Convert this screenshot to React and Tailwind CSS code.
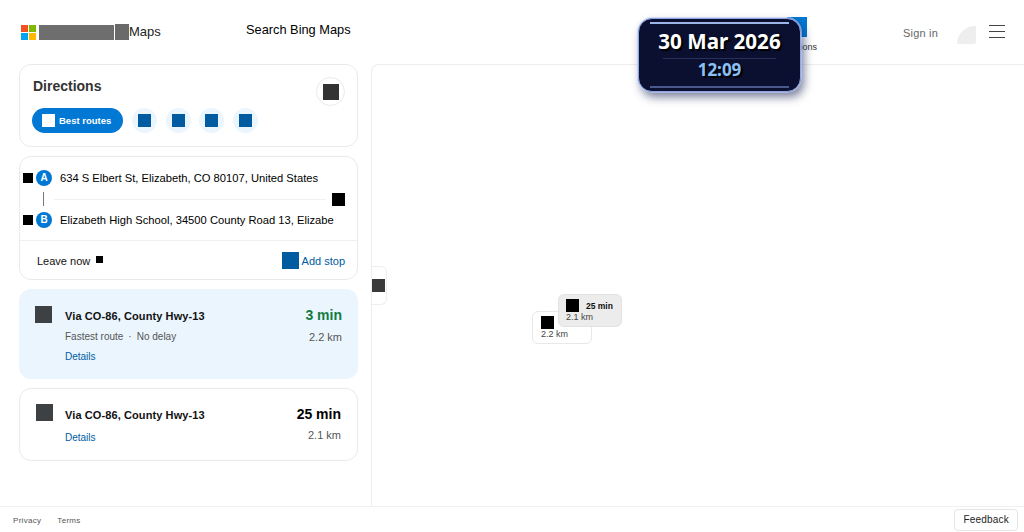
import React from 'react';

const Box = ({ className }) => <div className={`shrink-0 ${className}`} />;

function Header() {
  return (
    <header className="h-16 shrink-0 flex items-start">
      <div className="w-[246px] pl-[21px] pt-6 flex items-center">
        <div className="grid grid-cols-2 gap-px w-[15px] h-[15px] shrink-0">
          <div className="bg-[#f25022]" />
          <div className="bg-[#7fba00]" />
          <div className="bg-[#00a4ef]" />
          <div className="bg-[#ffb900]" />
        </div>
        <Box className="ml-[3px] w-[75px] h-[15px] bg-[#6e6e6e]" />
        <Box className="ml-px w-[14px] h-4 bg-[#6a6a6a]" />
        <span className="text-[13px] leading-4 text-[#222222]">Maps</span>
      </div>
      <div className="pt-[22px] text-[12.8px] leading-4 text-black">Search Bing Maps</div>
      <div className="ml-auto flex items-start">
        <div className="w-10 mr-[86px] mt-[17px] flex flex-col items-center">
          <Box className="w-5 h-5 bg-[#0078d4]" />
          <div className="mt-[4px] text-[9px] leading-3 text-[#333333]">Directions</div>
        </div>
        <div className="pt-[26px] text-[11px] leading-[14px] text-[#666666] tracking-[0.2px]">Sign in</div>
        <div className="ml-[19px] mt-[26px] w-[19px] h-[18px] bg-[#eeeeee] rounded-tl-[19px] rounded-br-[3px]" />
        <div className="ml-[13px] mr-[19px] mt-[25px] w-4 flex flex-col gap-[5px]">
          <div className="h-px bg-[#444444]" />
          <div className="h-px bg-[#444444]" />
          <div className="h-px bg-[#444444]" />
        </div>
      </div>
    </header>
  );
}

function Clock() {
  return (
    <div className="absolute left-[638px] top-[18px] w-[163px] h-[74px] rounded-[14px] bg-[#0b1030] border border-[#8fa6e6] shadow-[0_0_0_1px_rgba(190,205,245,0.6),3px_5px_10px_rgba(30,40,90,0.6)] flex flex-col items-center font-['Noto_Sans',sans-serif]">
      <div className="mt-[3px] w-[139px] h-[2px] bg-[#9db4e6]" />
      <div className="mt-[3px] text-[20.6px] leading-[29px] font-bold text-white [text-shadow:2px_2px_1px_#000]">30 Mar 2026</div>
      <div className="w-[113px] h-px bg-[#27305a] mt-[2px]" />
      <div className="text-[17px] leading-[22px] font-bold text-[#8cc0f5] [text-shadow:2px_2px_1px_#000]">12:09</div>
      <div className="mt-auto mb-[3px] w-[139px] h-[2px] bg-[#4a5a8c]" />
    </div>
  );
}

function ModeButton() {
  return (
    <div className="w-[25px] h-[25px] rounded-full bg-[#ebf5fe] flex items-center justify-center">
      <Box className="w-[13px] h-[13px] bg-[#005ba1]" />
    </div>
  );
}

function DirectionsCard() {
  return (
    <div className="h-[83px] border border-[#eaeaea] rounded-xl pl-3 pr-[13px]">
      <div className="flex justify-between items-start">
        <div className="mt-[13px] ml-px text-sm leading-4 font-bold text-[#333333]">Directions</div>
        <div className="mt-3 -mr-px w-[29px] h-[29px] rounded-full border border-[#eaeaea] flex items-center justify-center">
          <Box className="w-4 h-4 bg-[#333333]" />
        </div>
      </div>
      <div className="flex items-center gap-[9px] mt-[2px]">
        <div className="w-[91px] h-[25px] rounded-full bg-[#0078d4] flex items-center pl-[10px] gap-[4px]">
          <Box className="w-[13px] h-[13px] bg-white" />
          <span className="text-[9.5px] font-bold text-white leading-3">Best routes</span>
        </div>
        <div className="flex gap-[8.6px]">
          <ModeButton />
          <ModeButton />
          <ModeButton />
          <ModeButton />
        </div>
      </div>
    </div>
  );
}

function RouteForm() {
  return (
    <div className="mt-[9px] h-[124px] border border-[#eaeaea] rounded-xl">
      <div className="h-[84px] pt-[13px] border-b border-[#f0f0f0]">
        <div className="flex items-center h-4 pl-[3px]">
          <Box className="w-[10px] h-[10px] bg-black" />
          <div className="ml-[3px] w-4 h-4 rounded-full bg-[#0078d4] text-white text-[10px] font-bold leading-4 text-center">A</div>
          <span className="ml-2 text-[11.2px] leading-4 text-black">634 S Elbert St, Elizabeth, CO 80107, United States</span>
        </div>
        <div className="flex items-center h-[26px] pl-[23px] pr-3">
          <div className="w-px h-[14px] bg-[#777777]" />
          <div className="ml-[10px] flex-1 h-px bg-[#f0f0f0]" />
          <Box className="ml-[6px] w-[13px] h-[13px] bg-black" />
        </div>
        <div className="flex items-center h-4 pl-[3px]">
          <Box className="w-[10px] h-[10px] bg-black" />
          <div className="ml-[3px] w-4 h-4 rounded-full bg-[#0078d4] text-white text-[10px] font-bold leading-4 text-center">B</div>
          <span className="ml-2 text-[11.2px] leading-4 text-black whitespace-nowrap">Elizabeth High School, 34500 County Road 13, Elizabe</span>
        </div>
      </div>
      <div className="flex items-center justify-between h-[38px] pl-[17px] pr-3">
        <div className="flex items-center">
          <span className="mt-[2px] text-[11px] leading-4 text-[#111111]">Leave now</span>
          <Box className="ml-[6px] mb-px w-[7px] h-[7px] bg-black" />
        </div>
        <div className="flex items-center gap-[3px]">
          <Box className="w-[17px] h-[17px] bg-[#005ba1]" />
          <span className="mt-[2px] text-[11px] leading-4 text-[#005ba1]">Add stop</span>
        </div>
      </div>
    </div>
  );
}

function SelectedRouteCard() {
  return (
    <div className="h-[90px] px-4 rounded-xl flex bg-[#ebf5fe]">
      <Box className="mt-[17px] w-[17px] h-[17px] bg-[#3e4144]" />
      <div className="ml-[13px] flex-1 min-w-0">
        <div className="mt-5 text-[11px] leading-[14px] font-bold text-[#111111] tracking-[0.1px]">Via CO-86, County Hwy-13</div>
        <div className="mt-2 text-[10px] leading-3 text-[#555555]">Fastest route<span className="mx-[5px]">·</span>No delay</div>
        <div className="mt-2 text-[10px] leading-3 text-[#005ba1]">Details</div>
      </div>
      <div className="text-right">
        <div className="mt-[18px] text-sm leading-4 font-bold text-[#107c41]">3 min</div>
        <div className="mt-[7px] text-[11px] leading-[14px] text-[#555555]">2.2 km</div>
      </div>
    </div>
  );
}

function RouteCard() {
  return (
    <div className="h-[73px] px-4 rounded-xl flex bg-white border border-[#eaeaea]">
      <Box className="mt-[15px] w-[17px] h-[17px] bg-[#3e4144]" />
      <div className="ml-3 flex-1 min-w-0">
        <div className="mt-[19px] text-[11px] leading-[14px] font-bold text-[#111111] tracking-[0.1px]">Via CO-86, County Hwy-13</div>
        <div className="mt-[10px] text-[10px] leading-3 text-[#005ba1]">Details</div>
      </div>
      <div className="text-right">
        <div className="mt-[17px] text-sm leading-4 font-bold text-black">25 min</div>
        <div className="mt-[6px] text-[11px] leading-[14px] text-[#555555]">2.1 km</div>
      </div>
    </div>
  );
}

function MapArea() {
  return (
    <div className="relative flex-1 border-l border-t border-[#eeeeee] rounded-tl-lg">
      <div className="absolute left-0 top-[201px] w-[15px] h-[39px] bg-white border border-l-0 border-[#eeeeee] rounded-r-md flex items-center">
        <Box className="w-[13px] h-[13px] bg-[#3a3a3a]" />
      </div>
      <div className="absolute left-[160px] top-[246px] w-[60px] h-[33px] bg-white border border-[#e8e8e8] rounded-md pl-2 pt-1">
        <Box className="w-[13px] h-[13px] bg-black" />
        <div className="text-[9px] leading-[10px] text-[#444444]">2.2 km</div>
      </div>
      <div className="absolute left-[186px] top-[229px] w-[64px] h-[33px] bg-[#ececec] border border-[#e2e2e2] rounded-md pl-[7px] pt-1">
        <div className="flex items-center">
          <Box className="w-[13px] h-[13px] bg-black" />
          <span className="ml-[7px] text-[8.5px] leading-3 font-bold text-[#111111]">25 min</span>
        </div>
        <div className="text-[9px] leading-[10px] text-[#444444]">2.1 km</div>
      </div>
    </div>
  );
}

export default function App() {
  return (
    <div className="relative w-[1024px] h-[532px] overflow-hidden bg-white flex flex-col font-['Liberation_Sans',Arial,sans-serif]">
      <Header />
      <main className="flex flex-1 min-h-0">
        <aside className="w-[371px] shrink-0 pl-[19px] pr-[13px]">
          <DirectionsCard />
          <RouteForm />
          <div className="mt-[9px] flex flex-col gap-[9px]">
            <SelectedRouteCard />
            <RouteCard />
          </div>
        </aside>
        <MapArea />
      </main>
      <footer className="h-[26px] shrink-0 border-t border-[#f0f0f0] flex items-center pl-[13px] pr-[6px] gap-4">
        <span className="text-[8px] text-[#555555] tracking-[0.3px] mt-[2px]">Privacy</span>
        <span className="text-[8px] text-[#555555] tracking-[0.3px] mt-[2px]">Terms</span>
        <div className="ml-auto h-[22px] px-2 border border-[#e5e5e5] rounded bg-white text-[10px] leading-5 text-[#222222] tracking-[0.2px]">Feedback</div>
      </footer>
      <Clock />
    </div>
  );
}
